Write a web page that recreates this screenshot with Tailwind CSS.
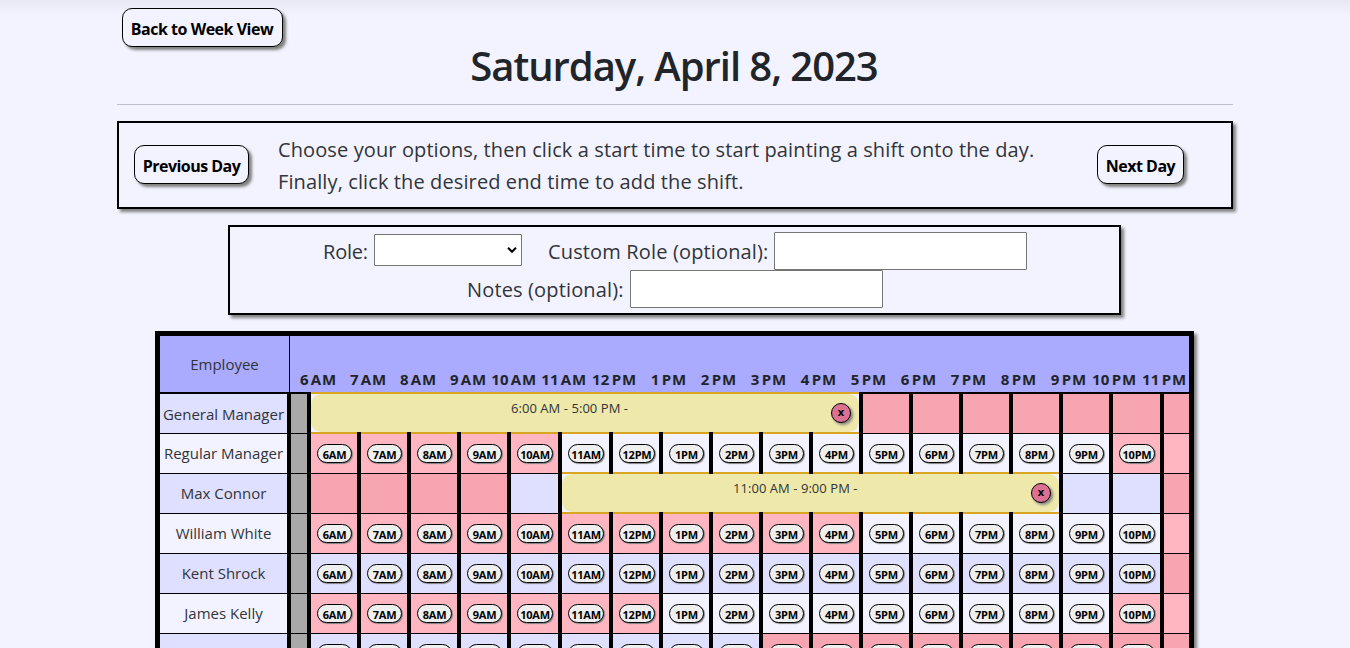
<!DOCTYPE html>
<html lang="en">
<head>
<meta charset="utf-8">
<title>Day View</title>
<script src="https://cdn.jsdelivr.net/npm/@tailwindcss/browser@4"></script>
</head>
<body class="h-[648px] overflow-hidden bg-[#f3f3ff] font-['Open_Sans','Noto_Sans',sans-serif] font-normal text-[#30353a]">
<div class="h-[15px] -mb-[15px] bg-linear-to-b from-[#e8e8f4] to-[#f3f3ff]"></div>
<main class="relative mx-auto flex w-[1116px] flex-col pt-2">
  <button class="ml-[5px] h-[39px] w-[161px] rounded-[10px] border border-black bg-[#f3f3ff] pt-[2px] pr-px text-base font-bold tracking-[-0.48px] text-black shadow-[3px_3px_3px_#808080] whitespace-nowrap">Back to Week View</button>
  <h1 class="mt-[-5px] h-[48px] pr-[2px] text-center text-[40px] leading-[48px] font-semibold tracking-[-1.05px] text-[#212529] whitespace-nowrap">Saturday, April 8, 2023</h1>
  <hr class="mt-[14px] border-t border-[#bfc0cb]">

  <section class="mt-4 flex h-[88px] items-center border-2 border-black pl-[15px] shadow-[3px_3px_3px_#808080]">
    <button class="-mt-px h-[39px] w-[115px] shrink-0 rounded-[10px] border border-black pt-[2px] text-base font-bold tracking-[-0.53px] text-black shadow-[3px_3px_3px_#808080] bg-[#f3f3ff] whitespace-nowrap">Previous Day</button>
    <p class="mt-px ml-[29px] w-[819px] text-xl leading-8 tracking-[0.11px] whitespace-nowrap">Choose your options, then click a start time to start painting a shift onto the day.<br>Finally, click the desired end time to add the shift.</p>
    <button class="-mt-px h-[39px] w-[87px] shrink-0 rounded-[10px] border border-black pt-[2px] text-base font-bold tracking-[-0.5px] text-black shadow-[3px_3px_3px_#808080] bg-[#f3f3ff] whitespace-nowrap">Next Day</button>
  </section>

  <section class="mt-4 ml-[111px] flex h-[90px] w-[893px] flex-col border-2 border-black pt-[5px] text-xl tracking-[0.15px] shadow-[3px_3px_3px_#808080]">
    <div class="flex h-[38px] items-center pl-[92px] whitespace-nowrap">
      <span class="w-[52px] pt-px pl-px tracking-[-0.2px]">Role:</span>
      <span class="-mt-[2px] flex h-8 w-[148px] items-center justify-end rounded-[1px] border border-[#767676] bg-white pr-[4px]">
        <svg class="h-[10px] w-[10px]" viewBox="0 0 10 10" fill="none" stroke="#000" stroke-width="2"><path d="M1 2.8 5 6.8 9 2.8"/></svg>
      </span>
      <span class="ml-[25px] w-[227px] pt-px pl-px">Custom Role (optional):</span>
      <input class="h-[38px] w-[253px] rounded-[1px] border border-[#767676] bg-white">
    </div>
    <div class="flex h-[38px] items-center pl-[236px] whitespace-nowrap">
      <span class="w-[164px] pt-px pl-px">Notes (optional):</span>
      <input class="h-[38px] w-[253px] rounded-[1px] border border-[#767676] bg-white">
    </div>
  </section>

  <section class="mt-4 ml-[38px] w-[1039px] border-5 border-black shadow-[3px_3px_3px_#808080]">
    <div class="flex h-[56px] bg-[#aaf]">
      <div class="flex w-[130px] items-center justify-center border-r border-black text-[15px]">Employee</div>
      <div id="hours" class="flex w-[897px] shrink-0 items-end text-[15px] font-bold text-[#212529]"></div>
    </div>
    <div id="rows" class="border-t-2 border-black"></div>
  </section>
</main>

<script>
const hours = ['6AM','7AM','8AM','9AM','10AM','11AM','12PM','1PM','2PM','3PM','4PM','5PM','6PM','7PM','8PM','9PM','10PM','11PM'];
// state per hour: p = unavailable, o = open, s = covered by a shift
const rows = [
  {name:'General Manager', cells:'sssssssssssppppppp', buttons:false, shift:{left:151, width:548, label:'6:00 AM - 5:00 PM -', pad:200}},
  {name:'Regular Manager', cells:'pppppooooooooooopp', buttons:true},
  {name:'Max Connor', cells:'ppppossssssssssoop', buttons:false, shift:{left:402, width:497, label:'11:00 AM - 9:00 PM -', pad:171}},
  {name:'William White', cells:'pppppppppppoooooop', buttons:true},
  {name:'Kent Shrock', cells:'ooooooooooooooooop', buttons:true},
  {name:'James Kelly', cells:'pppppppooooooooopp', buttons:true},
  {name:'Susan Brodey', cells:'oooooooooppppppppp', buttons:true},
];
document.getElementById('hours').innerHTML = hours.map((h,i) =>
  `<span class="mb-[2px] shrink-0 pr-[1px] text-right tracking-[0.2px] whitespace-nowrap" style="width:${i===0?48:50}px">${h.slice(0,-2)}<span class="ml-[2px] tracking-[0.9px]">${h.slice(-2)}</span></span>`).join('');
document.getElementById('rows').innerHTML = rows.map((r,n) => {
  const odd = n % 2 === 0;
  const base = odd ? 'bg-[#dfdfff]' : 'bg-[#f3f3ff]';
  const pink = odd ? 'bg-[#f8a5b2]' : 'bg-[#ffb6c1]';
  const cells = hours.map((h,i) => {
    const s = r.cells[i];
    const w = i === 17 ? 'w-[29px]' : (i === 4 || i === 5 || i === 16) ? 'w-[51px]' : 'w-[50px]';
    if (s === 's') return `<div class="${w} h-full shrink-0"></div>`;
    const btn = r.buttons && i < 17
      ? `<button class="mt-[10px] ml-[6px] flex h-[19px] ${h.length===4?'w-[36px]':'w-[35px]'} items-center justify-center rounded-full border border-black bg-[#efefef] pt-[3px] text-[11px] font-bold tracking-[-0.2px] text-black shadow-[1px_1px_1px_#808080]">${h}</button>` : '';
    const bar = n === 0 ? 'top-0 h-10' : '-top-[2px] h-[42px]';
    return `<div class="${w} relative h-full shrink-0 border-b border-black pl-1 ${s==='p'?pink:base}"><i class="absolute ${bar} left-0 z-20 w-1 bg-black"></i>${btn}</div>`;
  }).join('');
  const sh = r.shift ? `<i class="absolute top-0 z-20 -ml-1 h-10 w-1 bg-black" style="left:${r.shift.left}px"></i><div class="absolute -top-[2px] z-10 h-[42px] border-y-2 border-[#daa520] bg-[#f3f3ff]" style="left:${r.shift.left}px;width:${r.shift.width}px">
    <div class="relative h-full rounded-[10px] bg-[#eee8aa] pt-[5px] text-[13px] leading-[18px] tracking-[0.05px] whitespace-nowrap" style="padding-left:${r.shift.pad}px">${r.shift.label}
      <button class="absolute top-[9px] right-[8px] flex h-5 w-5 items-center justify-center rounded-full border border-black bg-[#db7093] pb-[2px] text-[11px] font-bold text-black shadow-[2px_2px_3px_#808080]">x</button></div></div>` : '';
  const pad = n === 0 ? 'pt-px' : 'pb-px';
  return `<div class="relative flex h-10">
    <div class="flex w-[127px] shrink-0 items-center justify-center border-b border-black ${pad} text-[15px] whitespace-nowrap ${base}">${r.name}</div>
    <div class="w-5 shrink-0 border-b border-l-4 border-black bg-[#a9a9a9]"></div>${cells}${sh}</div>`;
}).join('');
</script>
</body>
</html>
